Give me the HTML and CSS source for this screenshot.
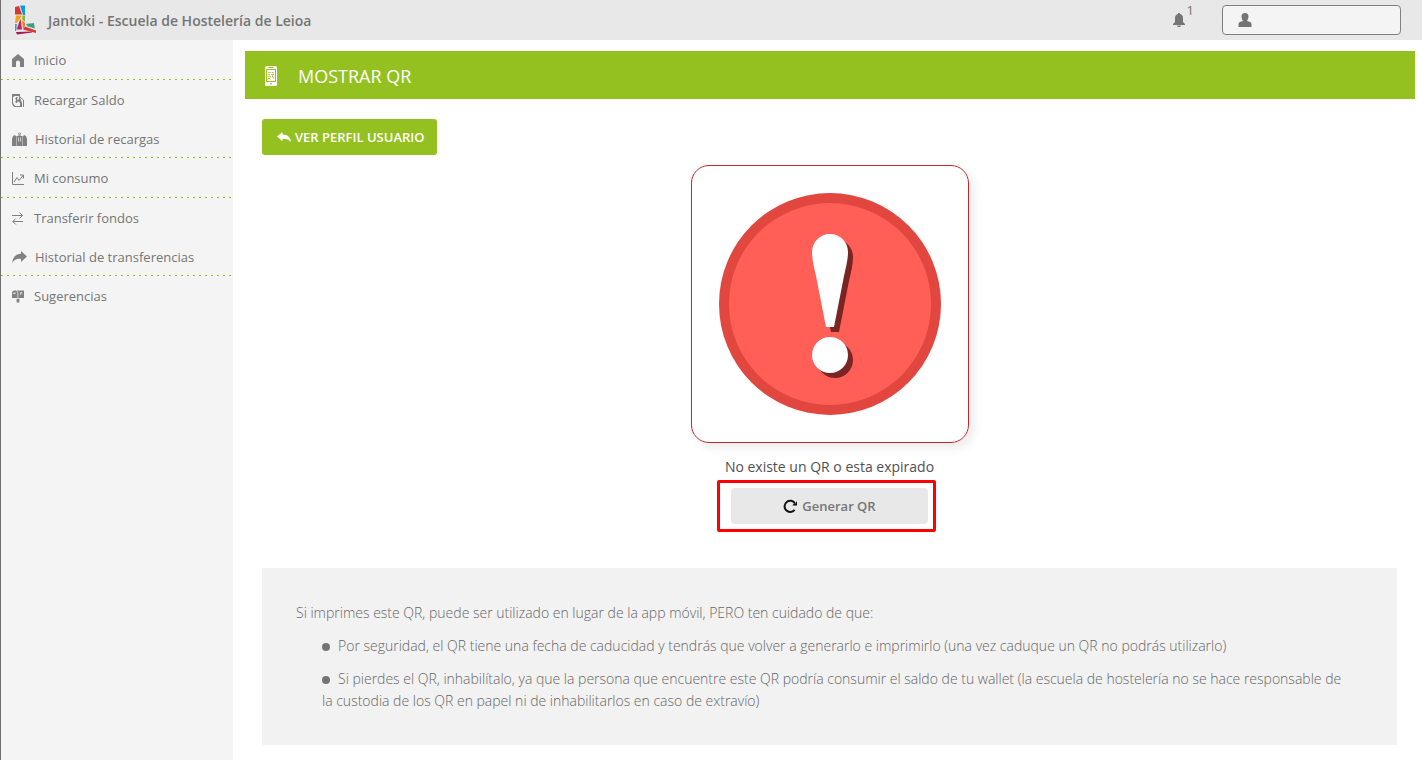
FILE: index.html
```html
<!DOCTYPE html>
<html lang="es">
<head>
<meta charset="utf-8">
<meta name="viewport" content="width=device-width, initial-scale=1">
<title>Jantoki - Mostrar QR</title>
<link rel="stylesheet" href="styles.css">
</head>
<body class="page">
<header class="topbar">
  <a class="brand" href="#">
    <svg class="brand-logo" viewBox="0 0 24 30" aria-hidden="true">
      <path fill="#d8382f" d="M1 2l4-1 3 8.500H1z"/>
      <path fill="#0a9be0" d="M6 .5h5V10H9z"/>
      <path fill="#f5a11c" d="M2 10.500h6L3 18H1z"/>
      <path fill="#3b9fd6" d="M1 19h2l-1 7H1z"/>
      <path fill="#8fb43c" d="M8.500 10.500H11V17l-3-3z"/>
      <path fill="#c9215f" d="M6.500 13.500L8 24.500H2.500z"/>
      <path fill="#ef7d1a" d="M8 15l3 3v3l-2 3z"/>
      <path fill="#32a287" d="M12 19l8-1 .8 5.500-7-2z"/>
      <path fill="#d8382f" d="M9 24.500l2-3 11 4V28z"/>
      <path fill="#a5195a" d="M2 27l16-.5v1L3 29.500z"/>
    </svg>
    <span>Jantoki - Escuela de Hostelería de Leioa</span>
  </a>
  <div class="tools">
    <button class="bell" type="button" aria-label="Notificaciones: 1">
      <svg class="bell-icon" viewBox="0 0 12 14" aria-hidden="true"><path fill="currentColor" d="M5 0h2v1c2 .5 3 2 3 4v4l2 2v1H0v-1l2-2V5c0-2 1-3.500 3-4zM4 12.500h4c0 2-4 2-4 0z"/></svg>
      <span class="bell-count">1</span>
    </button>
    <button class="user" type="button" aria-label="Usuario">
      <svg class="user-icon" viewBox="0 0 14 14" aria-hidden="true"><path fill="currentColor" d="M7 0c2.500 0 3.500 1.500 3.500 3.500S9.200 8 9 8c2.500.5 4.500 1 4.500 3v3H.5v-3c0-2 2-2.500 4.500-3-.2 0-1.500-2.500-1.500-4.500S4.500 0 7 0z"/></svg>
    </button>
  </div>
</header>
<div class="layout">
  <nav class="sidebar">
    <div class="nav-group">
      <a class="nav-link" href="#"><svg class="icon" viewBox="0 0 12 13"><path fill="currentColor" d="M6 0l6 5v8H8V8.500a2 2 0 0 0-4 0V13H0V5z"/></svg>Inicio</a>
    </div>
    <div class="nav-group">
      <a class="nav-link" href="#"><svg class="icon" viewBox="0 0 12 13" fill="none" stroke="currentColor"><path fill="currentColor" stroke="none" fill-rule="evenodd" d="M0 0h8v4l2 5v4H2l-2-3zM1 3v6l2 3h5V9L5 6l2-1V2H3z"/><path d="M6 4C4 2.500 2.500 5 5 6s0 3-2 1.500M4.500 3v6M8 3l3.500 3v7"/></svg>Recargar Saldo</a>
      <a class="nav-link" href="#"><svg class="icon icon-wide" viewBox="0 0 15 14"><path fill="currentColor" d="M0 14V7l1-3 2-1 1 1.500V14zM4.400 14V4H6V2.500a1.500 2 0 0 1 3 0V4h1.600v10zM11 14V4.500L12 3l2 1 1 3v7z"/><path stroke="#f4f4f4" stroke-width=".7" fill="none" d="M6.800 4V2.500a.7 1 0 0 1 1.400 0V4M6.500 5.500v4M8.500 5.500v4"/></svg>Historial de recargas</a>
    </div>
    <div class="nav-group">
      <a class="nav-link" href="#"><svg class="icon" viewBox="0 0 12 13" fill="none" stroke="currentColor"><path d="M.5 0v12.500H12M2 10l3-4.500 2 3L11.500 3M8 3h3.500v3.500"/></svg>Mi consumo</a>
    </div>
    <div class="nav-group">
      <a class="nav-link" href="#"><svg class="icon" viewBox="0 0 12 13" fill="none" stroke="currentColor"><path d="M0 3.500h10.500M7.500.5l3 3-3 3M11 9.500H.8M3.800 6.500l-3 3 3 3"/></svg>Transferir fondos</a>
      <a class="nav-link" href="#"><svg class="icon icon-wide" viewBox="0 0 15 14"><path fill="currentColor" d="M9 1l6 5.500L9 12V8.800C5 8.500 2 9.500 0 13 1 7 4 4 9 3.800z"/></svg>Historial de transferencias</a>
    </div>
    <div class="nav-group">
      <a class="nav-link" href="#"><svg class="icon" viewBox="0 0 13 13"><path fill="currentColor" fill-rule="evenodd" d="M2.500 0C1 0 0 1 0 3v5h6V3c0-2-1-3-2-3zM1 3.500h3v-1H1zM5 0h8v8H6.800V3C6.800 1.500 6 .5 5 0zM9 2v2.500h1V3h1V2zM5 9h3v4H5z"/></svg>Sugerencias</a>
    </div>
  </nav>
  <main class="main">
    <h1 class="banner">
      <svg class="phone-icon" viewBox="0 0 12 20" aria-hidden="true"><rect width="12" height="20" rx="1.500" fill="#fff"/><path fill="#94c11f" d="M3.500 1h5v1h-5zM1 3h10v1H1zM1 15h10v1H1zM1 4h1v11H1zM10 4h1v11h-1zM5.300 17h1.400v1.400H5.300z"/><path fill="#94c11f" d="M3 6h2.500v.7H3zM6.500 6H9v.7H6.500zM3 8h2v.7H3zM6 8h3v.7H6zM3 10h3v.7H3zM7 9.500h1v2H7zM3 12.300h2v.6H3zM8.300 11h.7v1.500h-.7z"/></svg>
      <span>MOSTRAR QR</span>
    </h1>
    <div class="content">
      <a class="back-link" href="#"><svg class="back-icon" viewBox="0 0 14 10" aria-hidden="true"><path fill="currentColor" d="M5.500 0v2.500C10.500 2.600 13.500 5 14 10 12 7.500 9.500 6.800 5.500 6.800V9.300L0 4.600z"/></svg>VER PERFIL USUARIO</a>
      <section class="qr">
        <div class="qr-card">
          <svg class="alert" viewBox="0 0 222 222" role="img" aria-label="Error">
            <circle cx="111" cy="111" r="111" fill="#e2473f"/>
            <circle cx="111" cy="111" r="101" fill="#ff5f57"/>
            <g fill="#7a2522"><path d="M98 64a18 18 0 0 1 36 0c0 8-2 15-4 24l-10 51h-8L102 88c-2-9-4-16-4-24z"/><circle cx="116" cy="167" r="18"/></g>
            <g fill="#fff"><path d="M93 59a18 18 0 0 1 36 0c0 8-2 15-4 24l-10 51h-8L97 83c-2-9-4-16-4-24z"/><circle cx="111" cy="162" r="18"/></g>
          </svg>
        </div>
        <p class="qr-text">No existe un QR o esta expirado</p>
        <div class="highlight">
          <button class="generate" type="button"><svg class="reload-icon" viewBox="0 0 14 14" aria-hidden="true"><path fill="none" stroke="#111" stroke-width="2" d="M11.600 10.800A5.600 5.600 0 1 1 12 4.500"/><path fill="#111" d="M14 2v4.500H9.500l1-1.500 2-.5z"/></svg>Generar QR</button>
        </div>
      </section>
      <section class="info">
        <p class="info-text">Si imprimes este QR, puede ser utilizado en lugar de la app móvil, PERO ten cuidado de que:</p>
        <ul class="info-list">
          <li class="info-item">Por seguridad, el QR tiene una fecha de caducidad y tendrás que volver a generarlo e imprimirlo (una vez caduque un QR no podrás utilizarlo)</li>
          <li class="info-item">Si pierdes el QR, inhabilítalo, ya que la persona que encuentre este QR podría consumir el saldo de tu wallet (la escuela de hostelería no se hace responsable de la custodia de los QR en papel ni de inhabilitarlos en caso de extravío)</li>
        </ul>
      </section>
    </div>
  </main>
</div>
</body>
</html>
```

FILE: styles.css
```css
* { box-sizing: border-box; }
.page {
  margin: 0;
  min-height: 100vh;
  display: flex;
  flex-direction: column;
  border-left: 1px solid #707070;
  background: #fff;
  color: #757575;
  font-family: "Open Sans", "Noto Sans", sans-serif;
  font-size: 13px;
}
.page a { color: inherit; text-decoration: none; }
.page button { font: inherit; color: inherit; cursor: pointer; }
.topbar {
  display: flex;
  justify-content: space-between;
  align-items: center;
  height: 40px;
  padding: 0 21px 0 13px;
  background: #e8e8e8;
}
.brand {
  display: flex;
  align-items: center;
  gap: 10px;
  font-size: 14px;
  font-weight: 600;
}
.brand-logo { width: 24px; height: 30px; }
.tools { display: flex; align-items: center; gap: 28px; }
.bell {
  display: flex;
  align-items: center;
  height: 36px;
  padding: 0;
  border: 0;
  background: none;
}
.bell-icon { width: 12px; height: 14px; margin-right: 2px; }
.bell-count { align-self: flex-start; line-height: 16px; }
.user {
  display: flex;
  align-items: center;
  width: 179px;
  height: 30px;
  padding: 0 15px;
  border: 1px solid #808080;
  border-radius: 4px;
  background: #f4f4f4;
}
.user-icon { width: 14px; height: 14px; }
.layout { flex: 1; display: flex; }
.sidebar { flex: none; width: 232px; background: #f4f4f4; }
.nav-group {
  padding-bottom: 1px;
  background: repeating-linear-gradient(90deg, #94c11f 0 2px, transparent 2px 6px) left bottom / 100% 1px no-repeat;
}
.nav-group:last-child { background: none; }
.nav-link {
  display: flex;
  align-items: center;
  gap: 10px;
  height: 39px;
  padding: 1px 11px 0;
}
.nav-link + .nav-link { height: 38px; }
.icon { width: 12px; height: 13px; color: #808080; }
.icon-wide { width: 15px; height: 14px; margin-right: -2px; }
.main { flex: 1; min-width: 0; padding: 11px 7px 0 12px; }
.banner {
  display: flex;
  align-items: center;
  gap: 21px;
  height: 48px;
  margin: 0;
  padding: 2px 20px 0;
  background: #94c11f;
  color: #fff;
  font-size: 18px;
  font-weight: 400;
}
.phone-icon { width: 12px; height: 20px; }
.content { padding: 20px 18px 15px 17px; }
.page .back-link {
  display: inline-flex;
  align-items: center;
  gap: 4px;
  height: 36px;
  padding: 0 13px 0 15px;
  border-radius: 3px;
  background: #94c11f;
  color: #fff;
  font-weight: 600;
  vertical-align: top;
}
.back-icon { width: 14px; height: 10px; }
.qr {
  display: flex;
  flex-direction: column;
  align-items: center;
  margin-top: 10px;
}
.qr-card {
  padding: 27px;
  border: 1px solid #c1272d;
  border-radius: 18px;
  box-shadow: 5px 5px 10px rgba(0, 0, 0, .08);
}
.alert { display: block; width: 222px; height: 222px; }
.qr-text {
  margin: 14px 0 3px;
  color: #505050;
  font-size: 14px;
  line-height: 20px;
}
.highlight {
  margin-right: 6px;
  padding: 5px 5px 5px 11px;
  border: 3px solid #f00;
  border-radius: 2px;
}
.generate {
  display: flex;
  align-items: center;
  justify-content: center;
  gap: 5px;
  width: 197px;
  height: 36px;
  border: 0;
  border-radius: 4px;
  background: #e8e8e8;
}
.page .generate { font-weight: 600; }
.reload-icon { width: 14px; height: 14px; }
.info {
  margin-top: 36px;
  padding: 34px 32px 33px 34px;
  background: #f2f2f2;
  font-size: 14px;
  font-weight: 300;
  line-height: 22px;
}
.info-text { margin: 0; color: #666; }
.info-list { margin: 0; padding: 0 14px 0 26px; list-style: none; color: #666; }
.info-item { margin-top: 11px; }
.info-item::before {
  content: "";
  display: inline-block;
  width: 8px;
  height: 8px;
  margin-right: 8px;
  border-radius: 50%;
  background: #757575;
}
```
